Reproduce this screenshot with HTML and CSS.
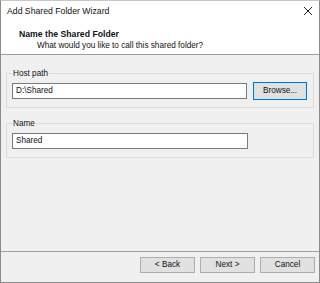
FILE: index.html
```html
<!DOCTYPE html>
<html>
<head>
<meta charset="utf-8">
<link rel="stylesheet" href="styles.css">
</head>
<body>
<div class="window">
  <div class="titlebar">
    <span class="title">Add Shared Folder Wizard</span>
    <svg class="close" width="10" height="10" viewBox="0 0 10 10"><path d="M1 1 L9 9 M9 1 L1 9" stroke="#222" stroke-width="1" fill="none"/></svg>
  </div>
  <div class="header">
    <div class="h-title">Name the Shared Folder</div>
    <div class="h-sub">What would you like to call this shared folder?</div>
  </div>
  <div class="content">
    <div class="group g1">
      <div class="legend">Host path</div>
      <div class="row">
        <div class="input">D:\Shared</div>
        <div class="btn browse">Browse...</div>
      </div>
    </div>
    <div class="group g2">
      <div class="legend">Name</div>
      <div class="row">
        <div class="input">Shared</div>
      </div>
    </div>
  </div>
  <div class="footer">
    <div class="btn">&lt; Back</div>
    <div class="btn">Next &gt;</div>
    <div class="btn">Cancel</div>
  </div>
</div>
</body>
</html>
```
FILE: styles.css
```css
html, body {
  margin: 0;
  padding: 0;
  background: #f0f0f0;
}
body {
  width: 320px;
  height: 283px;
  overflow: hidden;
  font-family: "Liberation Sans", Arial, sans-serif;
  font-size: 8.2px;
  color: #111;
}
.window {
  box-sizing: border-box;
  width: 320px;
  height: 283px;
  border: 1px solid #8a8a8a;
  border-top-color: #c8c8c8;
  display: flex;
  flex-direction: column;
  background: #f0f0f0;
}
.titlebar {
  height: 20px;
  background: #fff;
  display: flex;
  align-items: center;
  justify-content: space-between;
  padding: 0 6px 0 6px;
  font-size: 8.7px;
}
.close {
  display: block;
}
.header {
  height: 34px;
  background: #fff;
  border-bottom: 1px solid #a0a0a0;
  box-sizing: border-box;
  padding: 7px 0 0 18px;
}
.h-title {
  font-weight: bold;
  font-size: 8.7px;
  line-height: 12px;
}
.h-sub {
  padding-left: 18px;
  line-height: 12px;
}
.content {
  flex: 1;
  padding: 18px 5px 0 5px;
  display: flex;
  flex-direction: column;
  gap: 15px;
}
.group {
  border: 1px solid #dcdcdc;
  position: relative;
  padding: 8px 6px 7px 5px;
}
.legend {
  position: absolute;
  top: -6px;
  left: 5px;
  background: #f0f0f0;
  padding: 0 1px;
  line-height: 12px;
}
.row {
  display: flex;
  align-items: center;
  gap: 6px;
  min-height: 18px;
}
.input {
  box-sizing: border-box;
  width: 236px;
  height: 16px;
  border: 1px solid #7a7a7a;
  background: #fff;
  padding-left: 3px;
  line-height: 14px;
}
.btn {
  box-sizing: border-box;
  width: 55px;
  height: 16px;
  border: 1px solid #adadad;
  background: #e1e1e1;
  text-align: center;
  line-height: 14px;
}
.browse {
  width: 54px;
  height: 18px;
  border: 1px solid #0078d7;
  box-shadow: inset 0 0 0 1px #cde3f5;
  line-height: 16px;
}
.footer {
  height: 25px;
  border-top: 1px solid #a0a0a0;
  display: flex;
  justify-content: flex-end;
  align-items: flex-start;
  padding: 5px 4px 0 0;
  gap: 5px;
}
```
